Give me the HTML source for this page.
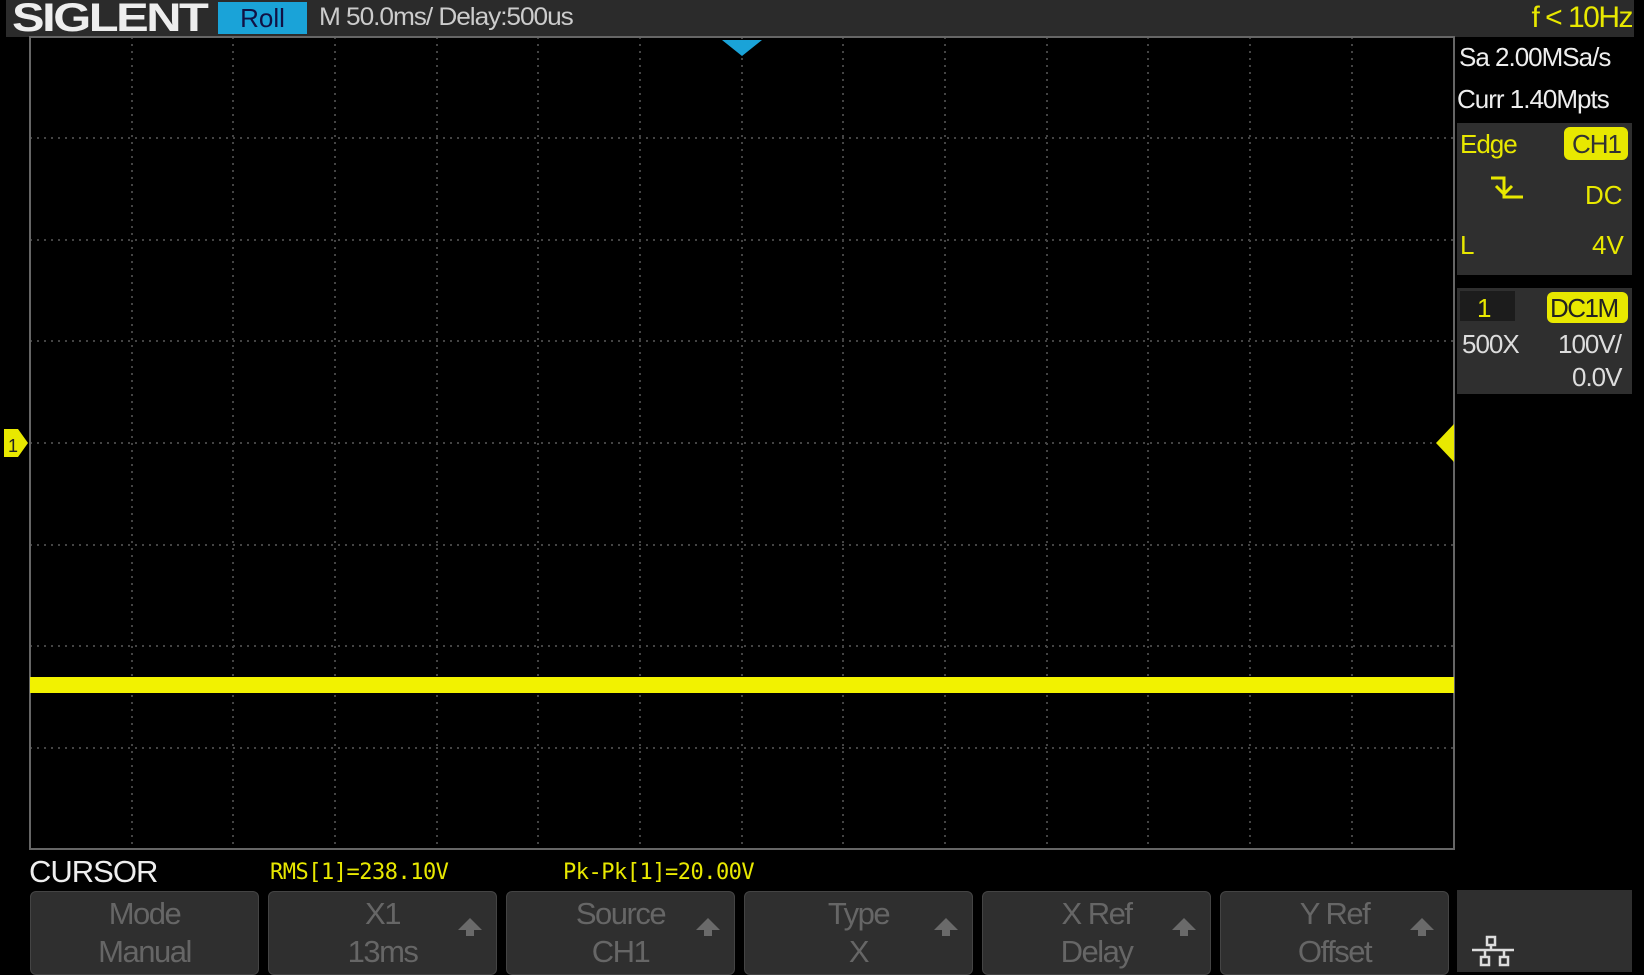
<!DOCTYPE html>
<html><head><style>
body{margin:0;width:1644px;height:972px;background:#000;overflow:hidden;position:relative;font-family:"Liberation Sans",sans-serif;}
.a{position:absolute;}
.btn{position:absolute;top:891px;height:84px;width:229px;background:#2f2f2f;border:1px solid #444;border-radius:6px;box-sizing:border-box;color:#666;font-size:31px;text-align:center;line-height:38px;padding-top:3px;letter-spacing:-1.5px}
.arr{position:absolute;right:14px;top:26px;width:0;height:0;border-left:12px solid transparent;border-right:12px solid transparent;border-bottom:12px solid #6a6a6a}
.arr:after{content:"";position:absolute;left:-4px;top:11px;width:8px;height:7px;background:#6a6a6a}
</style></head><body>
<div class="a" style="left:6px;top:0;width:1628px;height:37px;background:#2b2b2b"></div>
<div class="a" style="left:12px;top:-4px;font-size:40px;font-weight:bold;color:#eee;letter-spacing:-2px;transform:scaleX(1.22);transform-origin:left">SIGLENT</div>
<div class="a" style="left:218px;top:2px;width:89px;height:32px;background:#1aa3d8;color:#114;font-size:26px;text-align:center;line-height:32px">Roll</div>
<div class="a" style="left:319px;top:3px;font-size:25px;color:#ccc;letter-spacing:-1px;transform:scaleX(1.05);transform-origin:left">M 50.0ms/ Delay:500us</div>
<div class="a" style="right:12px;top:1px;font-size:30px;color:#e8e800;letter-spacing:-1.5px">f &lt; 10Hz</div>
<svg class="a" style="left:0;top:0" width="1644" height="972">
<g stroke="#444" stroke-width="2" stroke-dasharray="2,5">
<line x1="132" y1="37" x2="132" y2="849"/><line x1="233" y1="37" x2="233" y2="849"/><line x1="335" y1="37" x2="335" y2="849"/><line x1="437" y1="37" x2="437" y2="849"/><line x1="538" y1="37" x2="538" y2="849"/><line x1="640" y1="37" x2="640" y2="849"/><line x1="742" y1="37" x2="742" y2="849"/><line x1="843" y1="37" x2="843" y2="849"/><line x1="945" y1="37" x2="945" y2="849"/><line x1="1047" y1="37" x2="1047" y2="849"/><line x1="1148" y1="37" x2="1148" y2="849"/><line x1="1250" y1="37" x2="1250" y2="849"/><line x1="1352" y1="37" x2="1352" y2="849"/>
<line x1="30" y1="138" x2="1454" y2="138"/><line x1="30" y1="240" x2="1454" y2="240"/><line x1="30" y1="341" x2="1454" y2="341"/><line x1="30" y1="443" x2="1454" y2="443"/><line x1="30" y1="545" x2="1454" y2="545"/><line x1="30" y1="646" x2="1454" y2="646"/><line x1="30" y1="748" x2="1454" y2="748"/>
</g>
<rect x="30" y="37" width="1424" height="812" fill="none" stroke="#666" stroke-width="2"/>
<rect x="30" y="677" width="1424" height="16" fill="#f2f200"/>
<polygon points="722,40 762,40 742,56" fill="#1aa3d8"/>
<polygon points="4,429 18,429 28,443 18,457 4,457" fill="#e8e800"/>
<text x="8" y="452" font-size="18" fill="#222" font-family="Liberation Sans">1</text>
<polygon points="1454,424 1454,462 1436,443" fill="#e8e800"/>
<rect x="1457" y="123" width="175" height="152" fill="#2f2f2f"/>
<rect x="1457" y="288" width="175" height="106" fill="#2f2f2f"/>
<rect x="1460" y="291" width="55" height="30" fill="#1c1c1c"/>
<rect x="1564" y="127" width="64" height="33" rx="6" fill="#e8e800"/>
<rect x="1547" y="292" width="81" height="31" rx="6" fill="#e8e800"/>
<path d="M1491 178 H1504 V197 H1523 M1496 186 L1504 194 L1512 186" stroke="#e8e800" stroke-width="3" fill="none"/>
<rect x="1457" y="890" width="175" height="82" fill="#2f2f2f"/>
<g stroke="#ddd" stroke-width="2.5" fill="none"><rect x="1487" y="937" width="8" height="8"/><rect x="1481" y="957" width="8" height="8"/><rect x="1500" y="957" width="8" height="8"/><path d="M1491 945 V950 M1472 950 H1514 M1485 950 V957 M1504 950 V957"/></g>
</svg>
<div class="a" style="left:1459px;top:42px;font-size:26px;color:#eee;letter-spacing:-1px">Sa 2.00MSa/s</div>
<div class="a" style="left:1457px;top:84px;font-size:26px;color:#eee;letter-spacing:-1px">Curr 1.40Mpts</div>
<div class="a" style="left:1460px;top:129px;font-size:26px;color:#e8e800;letter-spacing:-1px">Edge</div>
<div class="a" style="left:1572px;top:129px;font-size:26px;color:#333;letter-spacing:-1px">CH1</div>
<div class="a" style="left:1585px;top:180px;font-size:26px;color:#e8e800">DC</div>
<div class="a" style="left:1460px;top:230px;font-size:26px;color:#e8e800">L</div>
<div class="a" style="left:1592px;top:230px;font-size:26px;color:#e8e800">4V</div>
<div class="a" style="left:1477px;top:293px;font-size:26px;color:#e8e800">1</div>
<div class="a" style="left:1550px;top:293px;font-size:26px;color:#222;letter-spacing:-1.5px">DC1M</div>
<div class="a" style="left:1462px;top:329px;font-size:26px;color:#ddd;letter-spacing:-1px">500X</div>
<div class="a" style="left:1558px;top:329px;font-size:26px;color:#ddd;letter-spacing:-1px">100V/</div>
<div class="a" style="left:1572px;top:362px;font-size:26px;color:#ddd;letter-spacing:-1px">0.0V</div>
<div class="a" style="left:29px;top:854px;font-size:31px;color:#eee;letter-spacing:-1px">CURSOR</div>
<div class="a" style="left:270px;top:860px;font-size:22px;color:#e8e800;font-family:'DejaVu Sans Mono',monospace;letter-spacing:-0.5px">RMS[1]=238.10V</div>
<div class="a" style="left:563px;top:860px;font-size:22px;color:#e8e800;font-family:'DejaVu Sans Mono',monospace;letter-spacing:-0.5px">Pk-Pk[1]=20.00V</div>
<div class="btn" style="left:30px">Mode<br>Manual</div>
<div class="btn" style="left:268px">X1<br>13ms<div class="arr"></div></div>
<div class="btn" style="left:506px">Source<br>CH1<div class="arr"></div></div>
<div class="btn" style="left:744px">Type<br>X<div class="arr"></div></div>
<div class="btn" style="left:982px">X Ref<br>Delay<div class="arr"></div></div>
<div class="btn" style="left:1220px">Y Ref<br>Offset<div class="arr"></div></div>
</body></html>
